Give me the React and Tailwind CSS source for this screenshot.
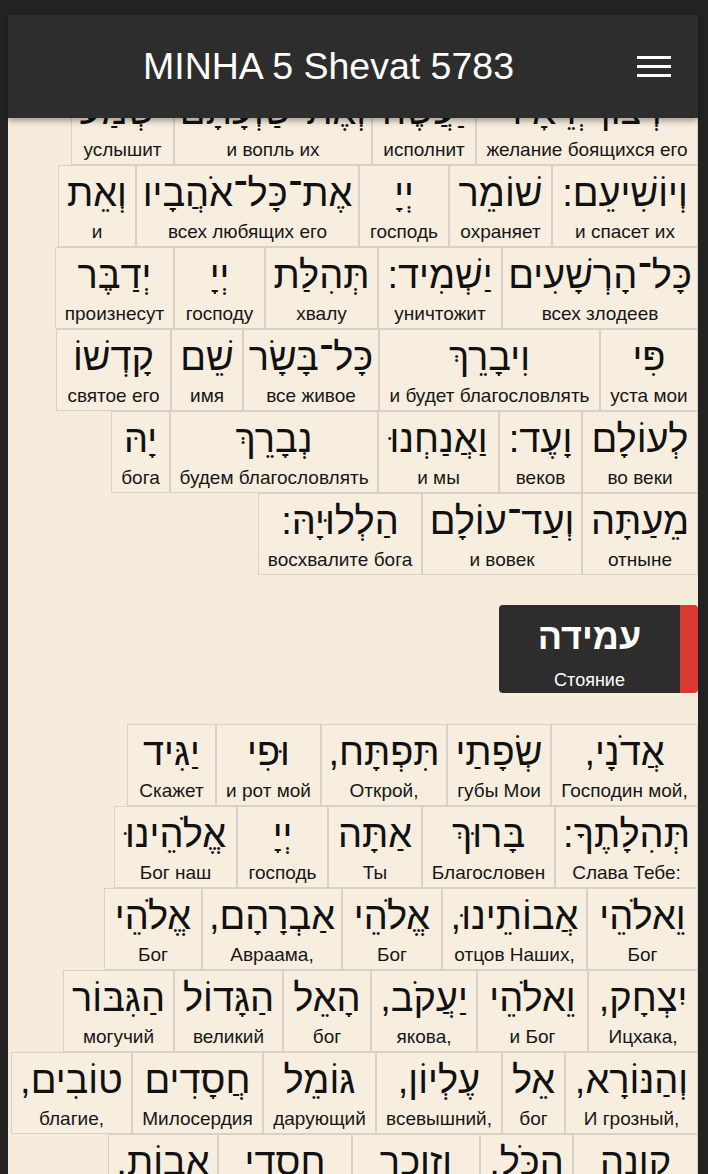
import React from 'react';

const psalmRows = [
  [['רְצוֹן־יְרֵאָיו', 'желание боящихся его', 222], ['יַעֲשֶׂה', 'исполнит', 104], ['וְאֶת־שַׁוְעָתָם', 'и вопль их', 198], ['יִשְׁמַע', 'услышит', 103]],
  [['וְיוֹשִׁיעֵם:', 'и спасет их', 146], ['שׁוֹמֵר', 'охраняет', 103], ['יְיָ', 'господь', 90], ['אֶת־כָּל־אֹהֲבָיו', 'всех любящих его', 223], ['וְאֵת', 'и', 78]],
  [['כָּל־הָרְשָׁעִים', 'всех злодеев', 196], ['יַשְׁמִיד:', 'уничтожит', 124], ['תְּהִלַּת', 'хвалу', 113], ['יְיָ', 'господу', 91], ['יְדַבֶּר', 'произнесут', 119]],
  [['פִּי', 'уста мои', 98], ['וִיבָרֵךְ', 'и будет благословлять', 221], ['כָּל־בָּשָׂר', 'все живое', 136], ['שֵׁם', 'имя', 72], ['קָדְשׁוֹ', 'святое его', 115]],
  [['לְעוֹלָם', 'во веки', 116], ['וָעֶד:', 'веков', 83], ['וַאֲנַחְנוּ', 'и мы', 121], ['נְבָרֵךְ', 'будем благословлять', 208], ['יָהּ', 'бога', 59]],
  [['מֵעַתָּה', 'отныне', 116], ['וְעַד־עוֹלָם', 'и вовек', 160], ['הַלְלוּיָהּ:', 'восхвалите бога', 164]],
];

const amidaRows = [
  [['אֲדֹנָי,', 'Господин мой,', 147], ['שְׂפָתַי', 'губы Мои', 104], ['תִּפְתָּח,', 'Открой,', 126], ['וּפִי', 'и рот мой', 105], ['יַגִּיד', 'Скажет', 89]],
  [['תְּהִלָּתֶךָ:', 'Слава Тебе:', 143], ['בָּרוּךְ', 'Благословен', 133], ['אַתָּה', 'Ты', 94], ['יְיָ', 'господь', 91], ['אֱלֹהֵינוּ', 'Бог наш', 123]],
  [['וֵאלֹהֵי', 'Бог', 111], ['אֲבוֹתֵינוּ,', 'отцов Наших,', 145], ['אֱלֹהֵי', 'Бог', 100], ['אַבְרָהָם,', 'Авраама,', 140], ['אֱלֹהֵי', 'Бог', 98]],
  [['יִצְחָק,', 'Ицхака,', 110], ['וֵאלֹהֵי', 'и Бог', 111], ['יַעֲקֹב,', 'якова,', 106], ['הָאֵל', 'бог', 88], ['הַגָּדוֹל', 'великий', 109], ['הַגִּבּוֹר', 'могучий', 111]],
  [['וְהַנּוֹרָא,', 'И грозный,', 133], ['אֵל', 'бог', 63], ['עֶלְיוֹן,', 'всевышний,', 126], ['גּוֹמֵל', 'дарующий', 113], ['חֲסָדִים', 'Милосердия', 131], ['טוֹבִים,', 'благие,', 121]],
  [['קונה', 'Владеющий', 125], ['הכֹּל,', 'всем,', 93], ['וזוכר', 'и помнящий', 128], ['חסדי', 'милости', 134], ['אבוֹת,', 'отцов,', 110]],
];

function Word({ he, ru, width }) {
  return (
    <div
      className="h-[82px] shrink-0 border border-[#d6d2c9] bg-[#f8eedf] flex flex-col items-center"
      style={{ width }}
    >
      <div className="mt-[2px] h-[50px] leading-[50px] text-[38px] text-[#111111] whitespace-nowrap">{he}</div>
      <div dir="ltr" className="mt-[2px] leading-[23px] text-[19px] text-[#161616] whitespace-nowrap">{ru}</div>
    </div>
  );
}

function Rows({ rows }) {
  return (
    <div>
      {rows.map((row, i) => (
        <div key={i} dir="rtl" className="flex">
          {row.map(([he, ru, w], j) => (
            <Word key={j} he={he} ru={ru} width={w} />
          ))}
        </div>
      ))}
    </div>
  );
}

export default function App() {
  return (
    <div className="w-[708px] h-[1174px] overflow-hidden bg-[#222222] pl-[8px] pr-[10px] pt-[15px] font-[Liberation_Sans,DejaVu_Sans,sans-serif]">
      <header className="relative z-10 h-[103px] bg-[#2d2d2d] flex items-center shadow-[0_3px_6px_rgba(0,0,0,0.35)]">
        <h1 className="ml-[135px] text-[37.5px] text-white leading-none font-normal">MINHA 5 Shevat 5783</h1>
        <button className="ml-auto mr-[27px] w-[34px] flex flex-col gap-[6px]">
          <span className="block h-[3px] bg-white" />
          <span className="block h-[3px] bg-white" />
          <span className="block h-[3px] bg-white" />
        </button>
      </header>

      <main className="-mt-[35px] bg-[#f7ecdc] pb-[40px]">
        <Rows rows={psalmRows} />

        <div className="flex justify-end mt-[30px] mb-[31px]">
          <div className="w-[199px] h-[88px] rounded-[4px] bg-[#2d2d2d] border-r-[18px] border-[#d83a31] flex flex-col items-center text-white">
            <div dir="rtl" className="mt-[10px] h-[44px] leading-[44px] text-[36px] font-bold">עמידה</div>
            <div className="mt-[10px] leading-[22px] text-[18px]">Стояние</div>
          </div>
        </div>

        <Rows rows={amidaRows} />
      </main>
    </div>
  );
}
